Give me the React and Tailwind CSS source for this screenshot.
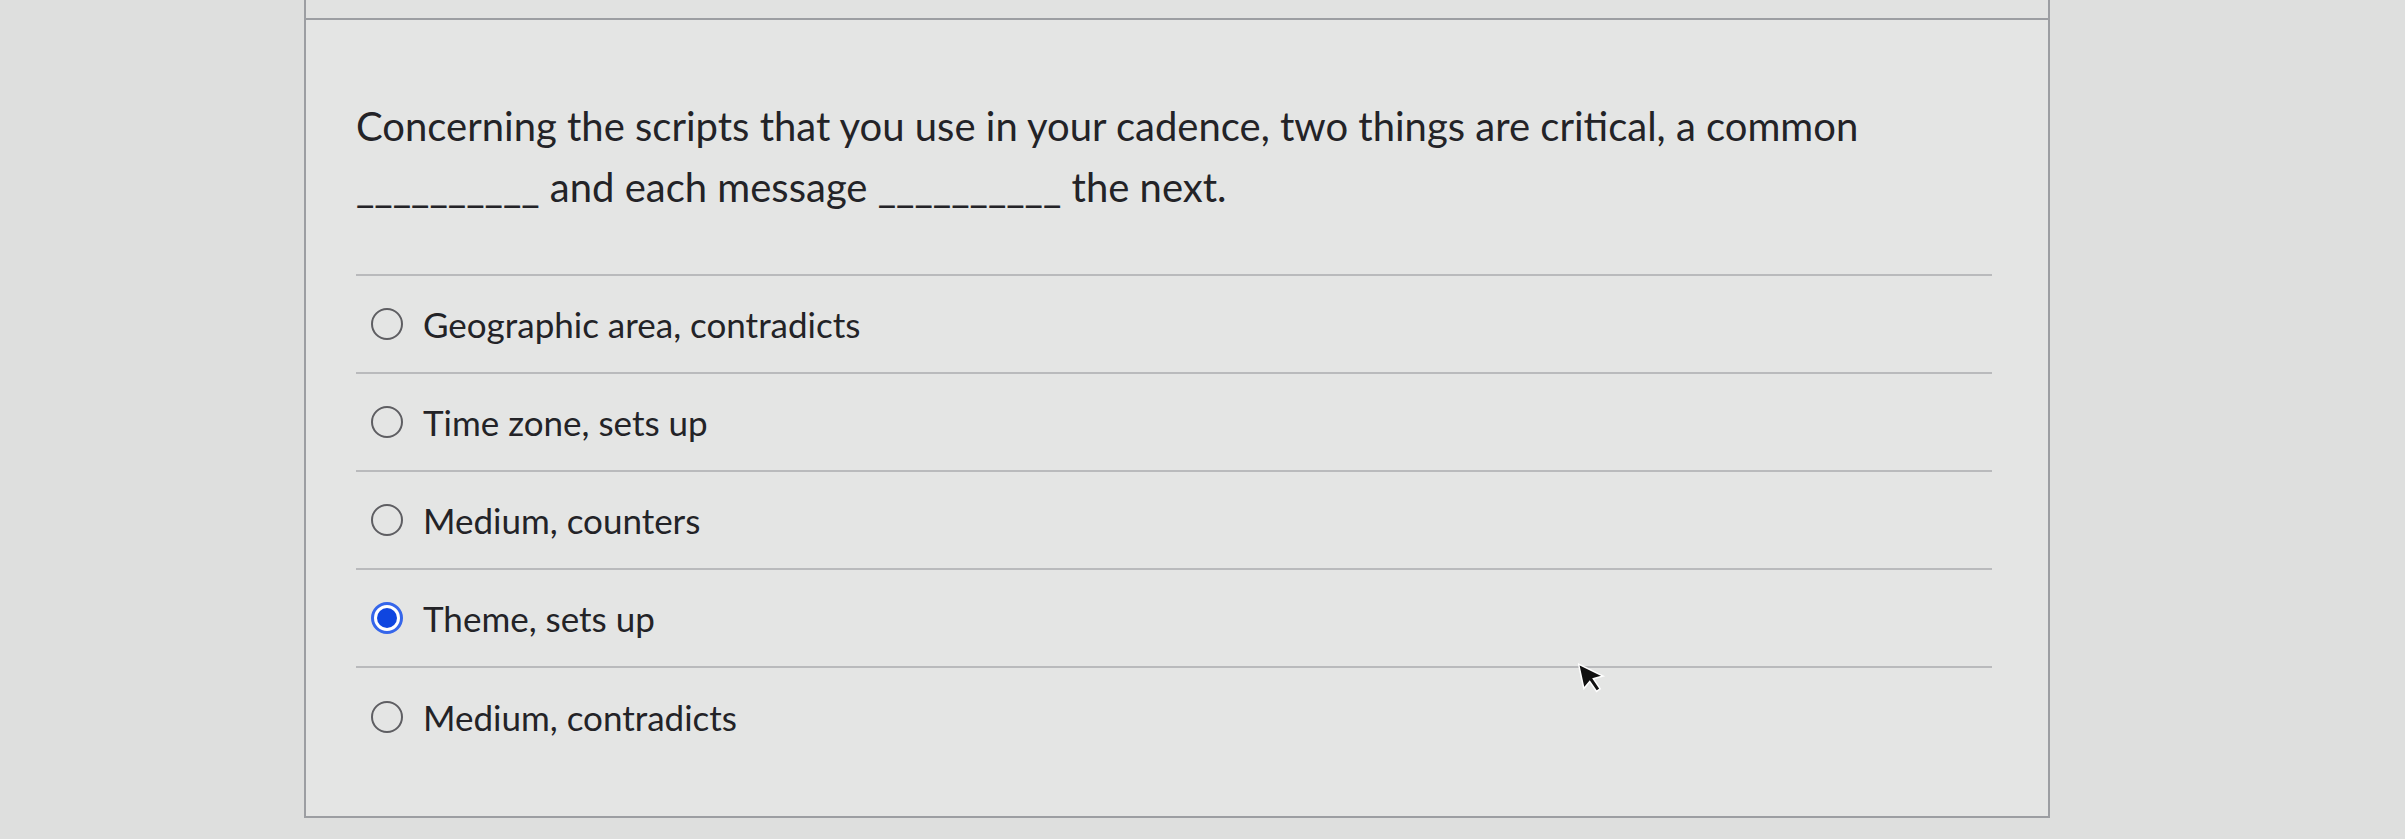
import React from 'react';

const options = [
    { label: 'Geographic area, contradicts', checked: false },
    { label: 'Time zone, sets up', checked: false },
    { label: 'Medium, counters', checked: false },
    { label: 'Theme, sets up', checked: true },
    { label: 'Medium, contradicts', checked: false },
];

const Radio = ({ checked }) => {
    if (checked) {
        return (
            <span className="flex h-[32px] w-[32px] shrink-0 items-center justify-center rounded-full border-[3px] border-[#3566ea] bg-white">
                <span className="h-[20px] w-[20px] rounded-full bg-[#0f46e0]" />
            </span>
        );
    }
    return <span className="h-[32px] w-[32px] shrink-0 rounded-full border-[2.5px] border-[#5e5e62] bg-transparent" />;
};

const App = () => {
    return (
        <div className="relative h-[839px] w-[2405px] overflow-hidden bg-[#dedfde]" style={{ fontFamily: 'Lato, "Open Sans", sans-serif' }}>
            <div className="ml-[304px] h-[818px] w-[1746px] border-x-2 border-b-2 border-[#9c9ea2] bg-[#e4e5e4]">
                <div className="h-[20px] border-b-2 border-[#9c9ea2] bg-[#e1e2e1]" />
                <div className="pl-[50px] pr-[56px] pt-[76px]">
                    <p className="text-[40px] leading-[61px] text-[#232327]">
                        Concerning the scripts that you use in your cadence, two things are critical, a common
                        <br />
                        __________ and each message __________ the next.
                    </p>
                    <ul className="mt-[56px] border-t-2 border-[#b9babc]">
                        {options.map((opt, i) => (
                            <li
                                key={i}
                                className={`flex h-[98px] items-center gap-[20px] pl-[15px] ${i < options.length - 1 ? 'border-b-2 border-[#b9babc]' : ''}`}
                            >
                                <Radio checked={opt.checked} />
                                <span className="text-[35px] text-[#232327]">{opt.label}</span>
                            </li>
                        ))}
                    </ul>
                </div>
            </div>
            {/* mouse pointer */}
            <svg className="absolute left-[1578px] top-[660px]" width="28" height="34" viewBox="0 0 28 34">
                <path d="M3 2 L25 18 L15 19 L20 30 L16 32 L11 21 L4 27 Z" fill="#111" stroke="#fff" strokeWidth="1.5" transform="rotate(-10 14 17)" />
            </svg>
        </div>
    );
};

export default App;
